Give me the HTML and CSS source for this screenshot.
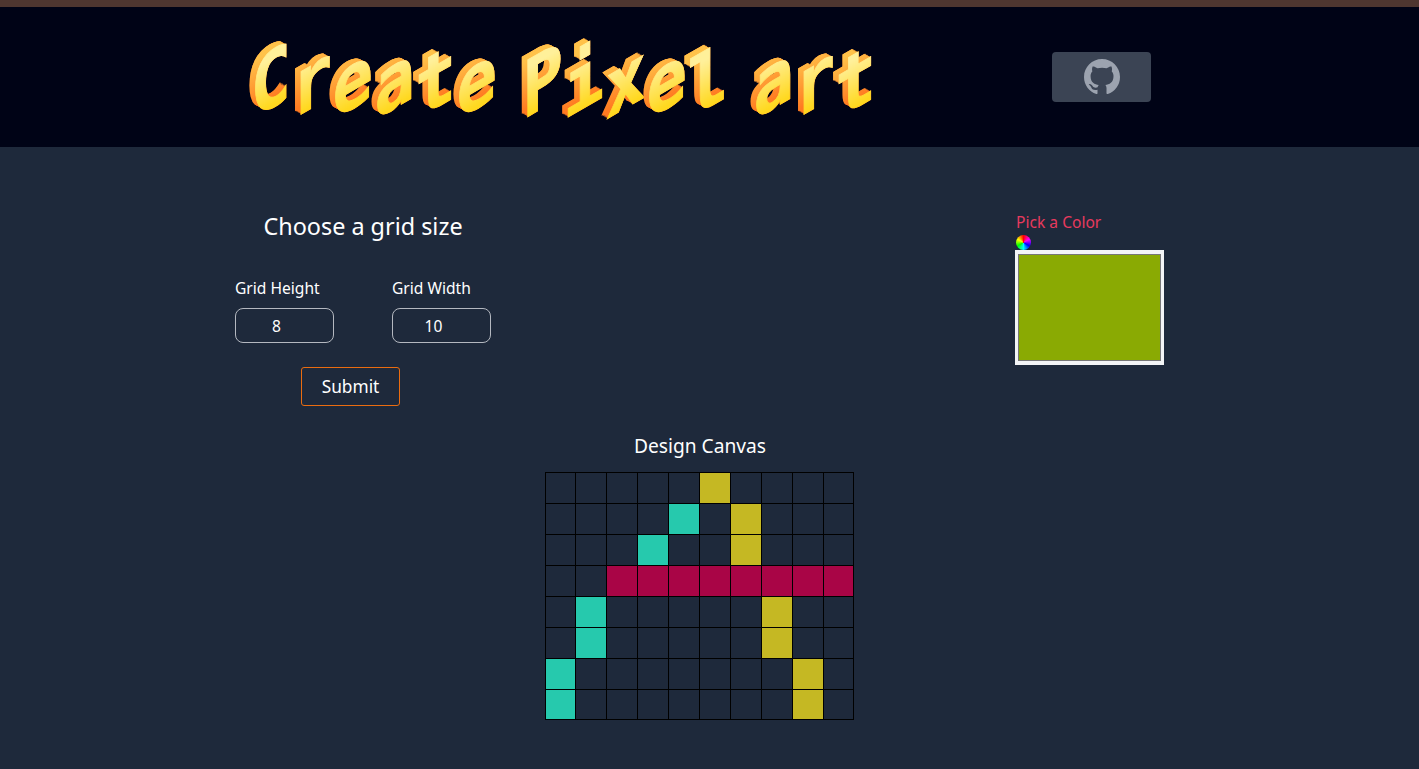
FILE: index.html
```html
<!DOCTYPE html>
<html lang="en">
<head>
<meta charset="utf-8">
<title>Create Pixel art</title>
<link rel="stylesheet" href="styles.css">
</head>
<body>
<header class="site-header">
  <h1 class="logo" aria-label="Create Pixel art">
    <span class="ch" data-c="C"><span class="face">C</span></span>
    <span class="ch" data-c="r"><span class="face">r</span></span>
    <span class="ch" data-c="e"><span class="face">e</span></span>
    <span class="ch" data-c="a"><span class="face">a</span></span>
    <span class="ch" data-c="t"><span class="face">t</span></span>
    <span class="ch" data-c="e"><span class="face">e</span></span>
    <span class="word-gap"></span>
    <span class="ch" data-c="P"><span class="face">P</span></span>
    <span class="ch" data-c="i"><span class="face">i</span></span>
    <span class="ch" data-c="x"><span class="face">x</span></span>
    <span class="ch" data-c="e"><span class="face">e</span></span>
    <span class="ch" data-c="l"><span class="face">l</span></span>
    <span class="word-gap"></span>
    <span class="ch" data-c="a"><span class="face">a</span></span>
    <span class="ch" data-c="r"><span class="face">r</span></span>
    <span class="ch" data-c="t"><span class="face">t</span></span>
  </h1>
  <a class="github" href="#" aria-label="GitHub">
    <svg viewBox="0 0 16 16" width="36" height="36"><path fill="#9ca3af" d="M8 0C3.58 0 0 3.58 0 8c0 3.54 2.29 6.53 5.47 7.59.4.07.55-.17.55-.38 0-.19-.01-.82-.01-1.49-2.01.37-2.53-.49-2.69-.94-.09-.23-.48-.94-.82-1.13-.28-.15-.68-.52-.01-.53.63-.01 1.08.58 1.23.82.72 1.21 1.87.87 2.33.66.07-.52.28-.87.51-1.07-1.78-.2-3.64-.89-3.64-3.95 0-.87.31-1.59.82-2.15-.08-.2-.36-1.02.08-2.12 0 0 .67-.21 2.2.82.64-.18 1.32-.27 2-.27.68 0 1.36.09 2 .27 1.53-1.04 2.2-.82 2.2-.82.44 1.1.16 1.92.08 2.12.51.56.82 1.27.82 2.15 0 3.07-1.87 3.75-3.65 3.95.29.25.54.73.54 1.48 0 1.07-.01 1.93-.01 2.2 0 .21.15.46.55.38A8.013 8.013 0 0016 8c0-4.42-3.58-8-8-8z"/></svg>
  </a>
</header>
<main class="content">
  <section class="controls">
    <form class="grid-form">
      <h2 class="form-title">Choose a grid size</h2>
      <div class="fields">
        <label class="field"><span class="field-label">Grid Height</span><input class="num" type="text" value="8"></label>
        <label class="field"><span class="field-label">Grid Width</span><input class="num" type="text" value="10"></label>
      </div>
      <button class="submit" type="button">Submit</button>
    </form>
    <div class="picker">
      <span class="picker-label">Pick a Color</span>
      <span class="wheel"></span>
      <input class="swatch" type="color" value="#8aaa03">
    </div>
  </section>
  <section class="canvas">
    <h3 class="canvas-title">Design Canvas</h3>
    <table class="pixels"><tbody>
      <tr><td></td><td></td><td></td><td></td><td></td><td class="y"></td><td></td><td></td><td></td><td></td></tr>
      <tr><td></td><td></td><td></td><td></td><td class="t"></td><td></td><td class="y"></td><td></td><td></td><td></td></tr>
      <tr><td></td><td></td><td></td><td class="t"></td><td></td><td></td><td class="y"></td><td></td><td></td><td></td></tr>
      <tr><td></td><td></td><td class="m"></td><td class="m"></td><td class="m"></td><td class="m"></td><td class="m"></td><td class="m"></td><td class="m"></td><td class="m"></td></tr>
      <tr><td></td><td class="t"></td><td></td><td></td><td></td><td></td><td></td><td class="y"></td><td></td><td></td></tr>
      <tr><td></td><td class="t"></td><td></td><td></td><td></td><td></td><td></td><td class="y"></td><td></td><td></td></tr>
      <tr><td class="t"></td><td></td><td></td><td></td><td></td><td></td><td></td><td></td><td class="y"></td><td></td></tr>
      <tr><td class="t"></td><td></td><td></td><td></td><td></td><td></td><td></td><td></td><td class="y"></td><td></td></tr>
    </tbody></table>
  </section>
</main>
</body>
</html>
```
FILE: styles.css
```css
* { box-sizing: border-box; }
html, body { margin: 0; padding: 0; }
body {
  min-height: 769px;
  background: #1e293b;
  color: #fff;
  font-family: "Noto Sans", "Open Sans", sans-serif;
  overflow: hidden;
}
.site-header {
  display: flex;
  align-items: center;
  height: 147px;
  padding: 0 0 0 250px;
  background: #000316;
  border-top: 7px solid #4e3630;
}
.logo {
  display: flex;
  width: 802px;
  height: 100%;
  margin: 0;
  padding-top: 8px;
  align-items: center;
  font-family: "DejaVu Sans Mono", monospace;
  font-weight: 700;
  font-size: 78px;
  line-height: 100px;
}
.ch {
  position: relative;
  display: block;
  width: 41.2px;
  text-align: center;
  transform: skewY(-30deg) scaleX(.86);
}
.ch::before, .ch::after {
  content: attr(data-c);
  position: absolute;
  left: -20%;
  right: -20%;
  top: 0;
  text-align: center;
  -webkit-text-stroke: 1px currentColor;
}
.ch::before {
  color: #ff7a22;
  text-shadow: -1px -1px 0 #ff7a22, -2px -2px 0 #ff7a22, -3px -3px 0 #ff7a22, -4px -4px 0 #ff7a22, -5px -5px 0 #ff7a22, -6px -6px 0 #ff7a22, -7px -6.5px 0 #ff7a22;
}
.ch::after {
  color: #ffc24a;
  text-shadow: -1px -1px 0 #ffc24a, -2px -2px 0 #ffc24a, -3px -3px 0 #ffc24a, -4px -4px 0 #ffc24a, -5px -5px 0 #ffc24a, -6px -6px 0 #ffc24a, -7px -6.5px 0 #ffc24a;
  -webkit-mask-image: linear-gradient(to bottom, #000 20%, transparent 70%);
  mask-image: linear-gradient(to bottom, #000 20%, transparent 70%);
}
.face {
  position: relative;
  z-index: 1;
  display: block;
  margin: 0 -20%;
  background: linear-gradient(to bottom, #fff09a 28%, #ffd81f 75%);
  -webkit-background-clip: text;
  background-clip: text;
  color: transparent;
  -webkit-text-stroke: 1px transparent;
}
.word-gap { width: 25px; }
.github {
  display: flex;
  align-items: center;
  justify-content: center;
  width: 99px;
  height: 50px;
  background: #3b4454;
  border-radius: 4px;
}
.github svg { display: block; }
.controls {
  display: flex;
  justify-content: space-between;
  align-items: flex-start;
  padding: 64px 255px 0 235px;
}
.grid-form { width: 256px; }
.form-title {
  margin: 0;
  font-size: 23.4px;
  font-weight: 400;
  line-height: 30px;
  text-align: center;
}
.fields {
  display: flex;
  gap: 58px;
  margin-top: 35px;
}
.field { display: block; width: 99px; }
.field-label {
  display: block;
  font-size: 15.6px;
  line-height: 24px;
  white-space: nowrap;
}
.num {
  display: block;
  width: 99px;
  height: 35px;
  margin-top: 8px;
  padding: 0 16px 0 0;
  background: transparent;
  border: 1px solid #b4b8c0;
  border-radius: 8px;
  color: #fff;
  font: inherit;
  font-size: 15.6px;
  text-align: center;
}
.submit {
  display: block;
  width: 99px;
  height: 39px;
  margin: 24px 0 0 66px;
  background: transparent;
  border: 1px solid #ea6c10;
  border-radius: 3px;
  color: #fff;
  font: inherit;
  font-size: 17.3px;
}
.picker { width: 149px; }
.picker-label {
  display: block;
  margin: 1px 0 3px;
  padding-left: 1px;
  color: #e83a5e;
  font-size: 15.6px;
  line-height: 20px;
}
.wheel {
  display: block;
  width: 15px;
  height: 15px;
  margin-left: 1px;
  border-radius: 50%;
  background: conic-gradient(#f00, #f0f, #00f, #0ff, #0f0, #ff0, #f00);
}
.swatch {
  display: block;
  width: 149px;
  height: 115px;
  padding: 4px 3px;
  background: #f3f4f6;
  border: 0;
  border-radius: 0;
  -webkit-appearance: none;
  appearance: none;
}
.swatch::-webkit-color-swatch-wrapper { padding: 0; }
.swatch::-webkit-color-swatch { border: 1px solid #777; border-radius: 0; }
.canvas { margin-top: 26px; }
.canvas-title {
  margin: 0;
  padding-right: 19px;
  font-size: 19.2px;
  font-weight: 400;
  line-height: 28px;
  text-align: center;
}
.pixels {
  margin: 12px 0 0 545px;
  border-collapse: separate;
  border-spacing: 1px;
  background: #000;
  table-layout: fixed;
}
.pixels td {
  width: 30px;
  height: 30px;
  padding: 0;
  background: #1e293b;
}
.pixels td:first-child, .pixels td:last-child { width: 29px; }
.pixels tr:last-child td { height: 29px; }
.pixels td.y { background: #c5b823; }
.pixels td.t { background: #26c9ad; }
.pixels td.m { background: #a90546; }
```
